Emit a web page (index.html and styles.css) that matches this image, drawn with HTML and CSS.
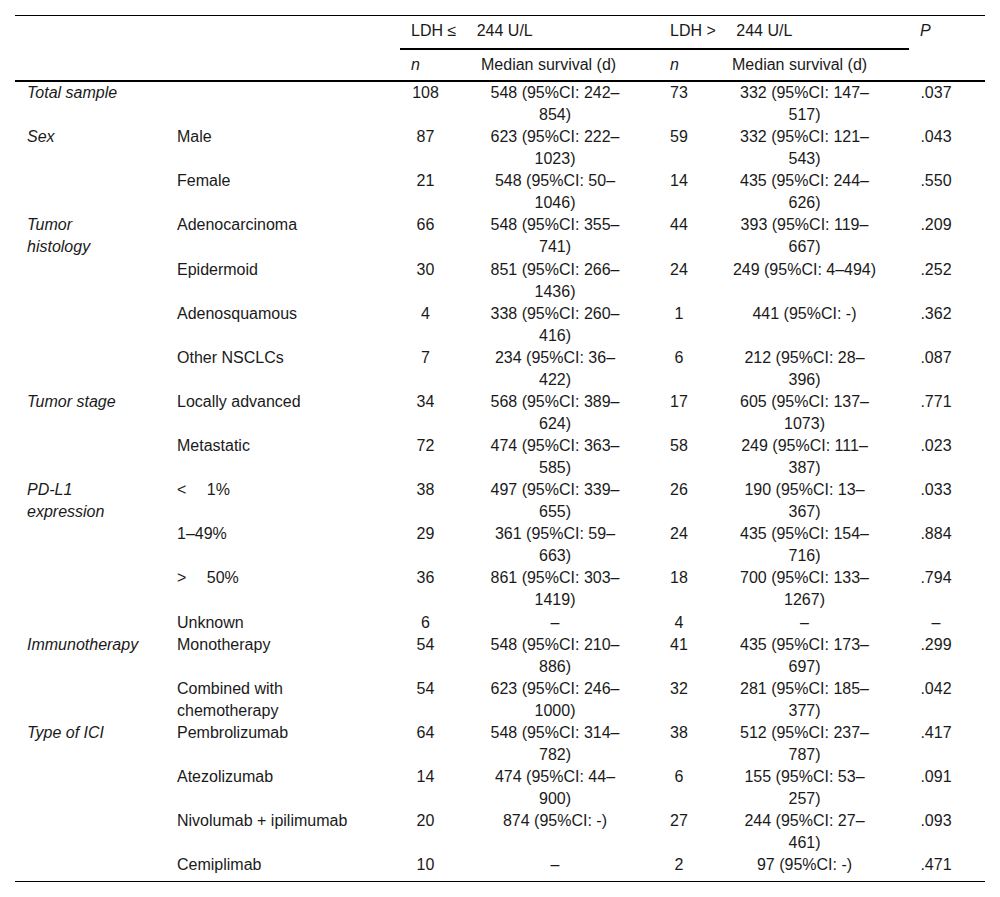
FILE: index.html
```html
<!DOCTYPE html>
<html lang="en">
<head>
<meta charset="utf-8">
<title>LDH survival table</title>
<link rel="stylesheet" href="styles.css">
</head>
<body>
<table class="data-table">
  <colgroup>
    <col class="c1"><col class="c2"><col class="c3"><col class="c4"><col class="c5"><col class="c6"><col class="c7">
  </colgroup>
  <thead>
    <tr class="head-top">
      <th colspan="2" rowspan="2" class="span-cell"></th>
      <th colspan="2" class="group">LDH ≤&nbsp;&emsp;244 U/L</th>
      <th colspan="2" class="group">LDH &gt;&nbsp;&emsp;244 U/L</th>
      <th rowspan="2" class="span-cell"><i>P</i></th>
    </tr>
    <tr class="head-sub">
      <th><i>n</i></th>
      <th>Median survival (d)</th>
      <th><i>n</i></th>
      <th>Median survival (d)</th>
    </tr>
  </thead>
  <tbody>
    <tr><td><i>Total sample</i></td><td></td><td>108</td><td>548 (95%CI: 242–854)</td><td>73</td><td>332 (95%CI: 147–517)</td><td>.037</td></tr>
    <tr><td><i>Sex</i></td><td>Male</td><td>87</td><td>623 (95%CI: 222–1023)</td><td>59</td><td>332 (95%CI: 121–543)</td><td>.043</td></tr>
    <tr><td></td><td>Female</td><td>21</td><td>548 (95%CI: 50–1046)</td><td>14</td><td>435 (95%CI: 244–626)</td><td>.550</td></tr>
    <tr><td><i>Tumor histology</i></td><td>Adenocarcinoma</td><td>66</td><td>548 (95%CI: 355–741)</td><td>44</td><td>393 (95%CI: 119–667)</td><td>.209</td></tr>
    <tr><td></td><td>Epidermoid</td><td>30</td><td>851 (95%CI: 266–1436)</td><td>24</td><td>249 (95%CI: 4–494)</td><td>.252</td></tr>
    <tr><td></td><td>Adenosquamous</td><td>4</td><td>338 (95%CI: 260–416)</td><td>1</td><td>441 (95%CI: -)</td><td>.362</td></tr>
    <tr><td></td><td>Other NSCLCs</td><td>7</td><td>234 (95%CI: 36–422)</td><td>6</td><td>212 (95%CI: 28–396)</td><td>.087</td></tr>
    <tr><td><i>Tumor stage</i></td><td>Locally advanced</td><td>34</td><td>568 (95%CI: 389–624)</td><td>17</td><td>605 (95%CI: 137–1073)</td><td>.771</td></tr>
    <tr><td></td><td>Metastatic</td><td>72</td><td>474 (95%CI: 363–585)</td><td>58</td><td>249 (95%CI: 111–387)</td><td>.023</td></tr>
    <tr><td><i>PD-L1 expression</i></td><td>&lt;&nbsp;&emsp;1%</td><td>38</td><td>497 (95%CI: 339–655)</td><td>26</td><td>190 (95%CI: 13–367)</td><td>.033</td></tr>
    <tr><td></td><td>1–49%</td><td>29</td><td>361 (95%CI: 59–663)</td><td>24</td><td>435 (95%CI: 154–716)</td><td>.884</td></tr>
    <tr><td></td><td>&gt;&nbsp;&emsp;50%</td><td>36</td><td>861 (95%CI: 303–1419)</td><td>18</td><td>700 (95%CI: 133–1267)</td><td>.794</td></tr>
    <tr><td></td><td>Unknown</td><td>6</td><td>–</td><td>4</td><td>–</td><td>–</td></tr>
    <tr><td><i>Immunotherapy</i></td><td>Monotherapy</td><td>54</td><td>548 (95%CI: 210–886)</td><td>41</td><td>435 (95%CI: 173–697)</td><td>.299</td></tr>
    <tr><td></td><td>Combined with chemotherapy</td><td>54</td><td>623 (95%CI: 246–1000)</td><td>32</td><td>281 (95%CI: 185–377)</td><td>.042</td></tr>
    <tr><td><i>Type of ICI</i></td><td>Pembrolizumab</td><td>64</td><td>548 (95%CI: 314–782)</td><td>38</td><td>512 (95%CI: 237–787)</td><td>.417</td></tr>
    <tr><td></td><td>Atezolizumab</td><td>14</td><td>474 (95%CI: 44–900)</td><td>6</td><td>155 (95%CI: 53–257)</td><td>.091</td></tr>
    <tr><td></td><td>Nivolumab + ipilimumab</td><td>20</td><td>874 (95%CI: -)</td><td>27</td><td>244 (95%CI: 27–461)</td><td>.093</td></tr>
    <tr class="last-row"><td></td><td>Cemiplimab</td><td>10</td><td>–</td><td>2</td><td>97 (95%CI: -)</td><td>.471</td></tr>
  </tbody>
</table>
</body>
</html>
```

FILE: styles.css
```css
html, body {
  margin: 0;
  padding: 0;
  background: #ffffff;
}

body {
  font-family: "Liberation Sans", Arial, sans-serif;
  font-size: 16px;
  color: #1a1a1a;
}

.data-table {
  margin: 15px 0 0 15px;
  width: 970px;
  table-layout: fixed;
  border-collapse: separate;
  border-spacing: 0;
  border-top: 1px solid #000;
  border-bottom: 1px solid #000;
}

.c1 { width: 151px; }
.c2 { width: 234px; }
.c3 { width: 70px; }
.c4 { width: 189px; }
.c5 { width: 62px; }
.c6 { width: 188px; }
.c7 { width: 76px; }

.data-table th {
  font-weight: normal;
  text-align: left;
  vertical-align: top;
  line-height: 22px;
  padding: 4px 11px 4px 11px;
}

.data-table .head-top th {
  padding-bottom: 6px;
}

.data-table .group {
  border-bottom: 2px solid #000;
}

.data-table .span-cell,
.data-table .head-sub th {
  border-bottom: 2px solid #000;
}

.data-table td {
  vertical-align: top;
  line-height: 1.379;
  padding: 0 30px 0 11px;
  text-align: center;
}

.data-table td:nth-child(1) {
  text-align: left;
  padding-left: 12px;
  padding-right: 29px;
}

.data-table td:nth-child(2) {
  text-align: left;
  padding-right: 30px;
}

.data-table td:nth-child(3) { padding-right: 30px; }
.data-table td:nth-child(4) { padding-right: 30px; }
.data-table td:nth-child(5) { padding-right: 33px; }
.data-table td:nth-child(6) { padding-right: 32px; }
.data-table td:nth-child(7) { padding-right: 33px; }

.data-table .last-row td {
  padding-bottom: 5px;
}
```
